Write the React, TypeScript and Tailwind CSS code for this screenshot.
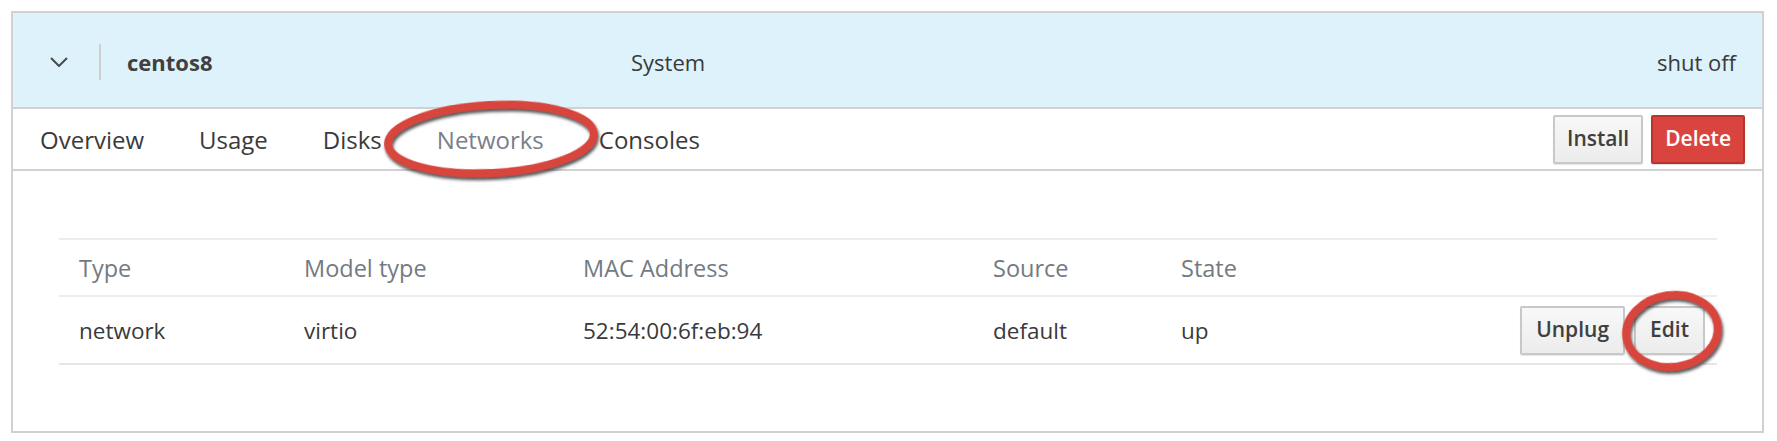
import React from 'react';

const font = { fontFamily: '"Open Sans", "Liberation Sans", sans-serif' };

function Btn({ children, danger, tight }: { children: React.ReactNode; danger?: boolean; tight?: boolean }) {
  const pad = tight ? 'px-[12px]' : 'px-[14px]';
  return (
    <button
      className={
        danger
          ? `h-[49px] ${pad} rounded-[2px] border-2 border-[#b9342d] bg-[#d9453e] text-white text-[21px] font-semibold shadow-[0_1px_1px_rgba(0,0,0,0.15)]`
          : `h-[49px] ${pad} rounded-[2px] border-2 border-[#c8c8c8] bg-gradient-to-b from-[#f8f8f8] to-[#ececec] text-[#3f3f3f] text-[21px] font-semibold shadow-[0_1px_1px_rgba(0,0,0,0.1)]`
      }
    >
      {children}
    </button>
  );
}

const columns = ['Type', 'Model type', 'MAC Address', 'Source', 'State'];
const row = ['network', 'virtio', '52:54:00:6f:eb:94', 'default', 'up'];

export default function App() {
  return (
    <div className="relative w-[1777px] h-[441px] bg-white text-[#3a3a3a]" style={font}>
      <div className="absolute left-[11px] top-[11px] w-[1753px] h-[422px] border-2 border-[#d1d1d1] flex flex-col">
        {/* header */}
        <div className="h-[96px] shrink-0 bg-[#def2fb] border-b-2 border-[#d1d1d1] flex items-center pt-[4px] pl-[37px] pr-[26px] text-[22px]">
          <svg width="18" height="10" viewBox="0 0 18 10" className="shrink-0">
            <polyline points="1,1 9,9 17,1" fill="none" stroke="#4a4a4a" strokeWidth="2" />
          </svg>
          <div className="ml-[31px] w-[2px] h-[36px] bg-[#cfcfcf]" />
          <div className="ml-[26px] w-[504px] font-bold text-[#404040]">centos8</div>
          <div className="flex-1">System</div>
          <div>shut off</div>
        </div>

        {/* tabs */}
        <div className="h-[62px] shrink-0 border-b-2 border-[#d1d1d1] flex items-center pl-[27px] pr-[17px]">
          <div className="flex items-center gap-[55px] text-[24px] pt-[2px]">
            <span>Overview</span>
            <span>Usage</span>
            <span>Disks</span>
            <span className="text-[#7a8089]">Networks</span>
            <span>Consoles</span>
          </div>
          <div className="ml-auto flex items-center gap-[8px]">
            <Btn tight>Install</Btn>
            <Btn danger tight>Delete</Btn>
          </div>
        </div>

        {/* body */}
        <div className="flex-1 pt-[67px] pl-[46px] pr-[45px]">
          <div className="border-t-2 border-[#ededed] text-[22.5px]">
            <div className="grid grid-cols-[225px_279px_410px_188px_1fr] h-[57px] items-center pt-[3px] border-b-2 border-[#ededed] text-[#737a82] text-[23.5px]">
              {columns.map(c => (
                <div key={c} className="pl-[20px]">{c}</div>
              ))}
            </div>
            <div className="grid grid-cols-[225px_279px_410px_188px_1fr] h-[68px] items-center border-b-2 border-[#e6e6e6]">
              {row.slice(0, 4).map(c => (
                <div key={c} className="pl-[20px] pt-[2px]">{c}</div>
              ))}
              <div className="pl-[20px] pr-[12px] flex items-center">
                <span className="pt-[2px]">{row[4]}</span>
                <div className="ml-auto flex items-center gap-[9px]">
                  <Btn>Unplug</Btn>
                  <Btn>Edit</Btn>
                </div>
              </div>
            </div>
          </div>
        </div>
      </div>

      {/* annotation marks */}
      <svg className="absolute left-0 top-0 pointer-events-none" width="1777" height="441">
        <defs>
          <filter id="sh" x="-20%" y="-30%" width="140%" height="160%">
            <feDropShadow dx="1" dy="3" stdDeviation="1.5" floodColor="#3a3a3a" floodOpacity="0.85" />
          </filter>
        </defs>
        <ellipse cx="491" cy="139" rx="103" ry="34" transform="rotate(-3 491 139)" fill="none" stroke="#d8443c" strokeWidth="8" filter="url(#sh)" />
        <ellipse cx="1672" cy="331" rx="46" ry="36" transform="rotate(-8 1672 331)" fill="none" stroke="#d8443c" strokeWidth="8" filter="url(#sh)" />
      </svg>
    </div>
  );
}
